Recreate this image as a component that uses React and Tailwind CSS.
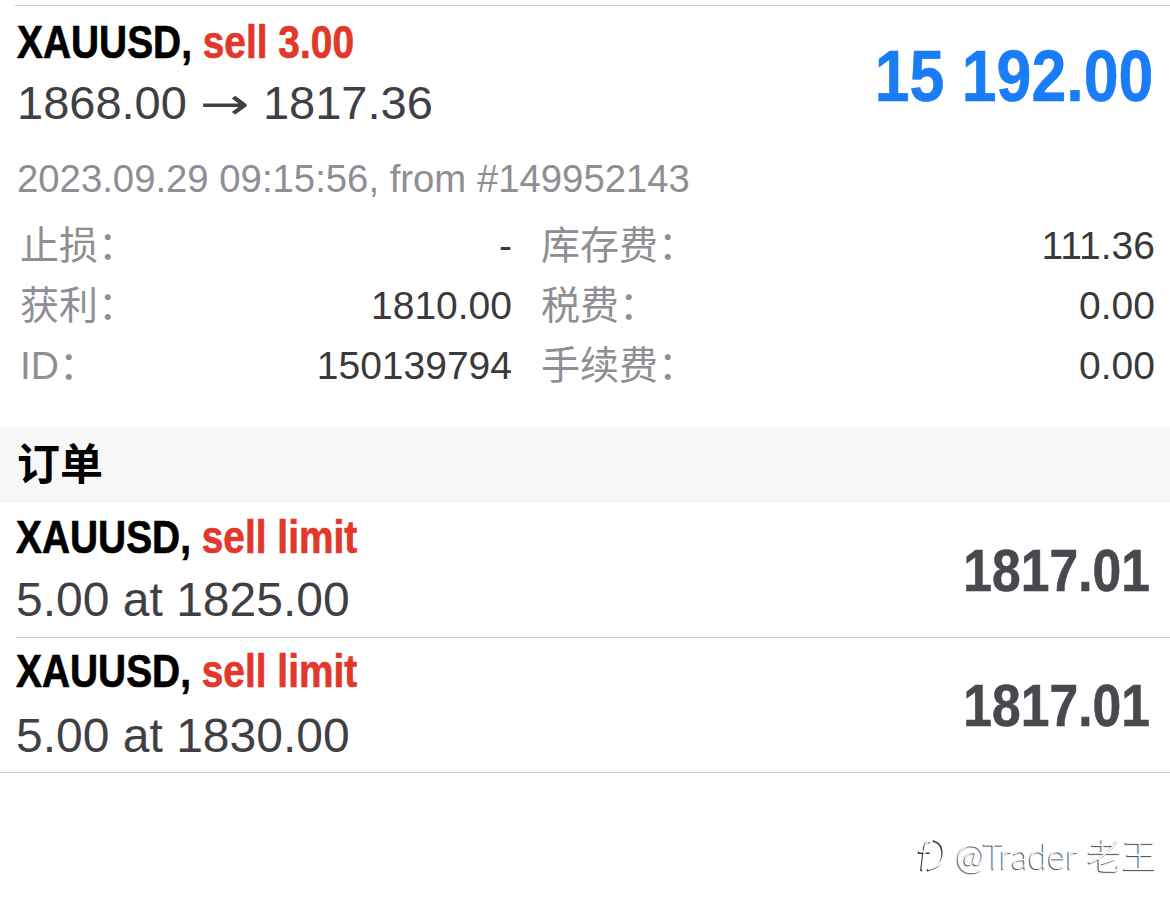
import React from 'react'

const sans = { fontFamily: '"Liberation Sans", "Noto Sans CJK SC", sans-serif' }

// iOS uses a condensed bold here; Liberation Sans squeezed horizontally gets close
function Title({ children }) {
  return (
    <div className="h-[56px] leading-[56px] text-[46px] font-bold whitespace-nowrap">
      <span className="inline-block origin-left scale-x-[0.845] [-webkit-text-stroke:0.7px_currentColor]">{children}</span>
    </div>
  )
}

function Field({ label, value }) {
  return (
    <div className="flex items-center justify-between h-[60px]">
      <span className="text-[#8e8e93]">{label}</span>
      <span className="text-[#3a3a3c]">{value}</span>
    </div>
  )
}

function OrderRow({ price, inset, lift }) {
  return (
    <div className={inset ? 'pl-[16px]' : ''}>
      <div className={'flex items-center justify-between h-[135px] border-b border-[#c8c8cc] pr-[20px] ' + (inset ? '' : 'pl-[16px]')}>
        <div className="-mt-[2px]">
          <Title>
            <span className="text-black">XAUUSD, </span>
            <span className="text-[#e2382c]">sell limit</span>
          </Title>
          <div className={'h-[60px] leading-[60px] text-[48px] text-[#3f3f45] ' + lift}>{price}</div>
        </div>
        <div className="text-[60px] font-bold text-[#48484e] mt-[2px] origin-right scale-x-[0.86] [-webkit-text-stroke:0.6px_currentColor]">1817.01</div>
      </div>
    </div>
  )
}

function Logo() {
  const strokes = (
    <>
      <path d="M13 7 C9.5 7 8.5 10 8 15 L5.5 35" />
      <path d="M3 17.5 L13 17.5" />
      <path d="M18 6 C27 8 29 20 24 28 C20.5 33 16 33 12 35" />
    </>
  )
  return (
    <svg width="34" height="42" viewBox="0 0 34 42" fill="none" strokeLinecap="round">
      <g transform="translate(-1.2,1.2)" stroke="rgba(0,0,0,0.75)" strokeWidth="2.4">{strokes}</g>
      <g stroke="white" strokeWidth="2.2">{strokes}</g>
    </svg>
  )
}

export default function App() {
  return (
    <div className="w-[1170px] h-[910px] bg-white overflow-hidden" style={sans}>
      <div className="pt-[5px]">
        <div className="ml-[15px] border-t border-[#c8c8cc]" />
      </div>

      <div className="pt-[8px] pl-[17px] pr-[17px]">
        <div className="flex items-center justify-between">
          <div>
            <Title>
              <span className="text-black">XAUUSD, </span>
              <span className="text-[#e2382c]">sell 3.00</span>
            </Title>
            <div className="h-[56px] leading-[56px] text-[47px] text-[#3f3f45] mt-[5px] whitespace-nowrap">
              1868.00
              <span className="inline-block w-[76px] text-center font-['DejaVu_Sans',sans-serif] text-[44px]">
                <span className="inline-block scale-x-[1.35]">→</span>
              </span>
              1817.36
            </div>
          </div>
          <div className="text-[72px] font-bold text-[#1a7cf6] mt-[6px] origin-right scale-x-[0.87] [-webkit-text-stroke:0.6px_currentColor]">15 192.00</div>
        </div>
        <div className="mt-[26px] h-[44px] leading-[44px] text-[38.3px] text-[#8e8e93]">2023.09.29 09:15:56, from #149952143</div>
      </div>

      <div className="mt-[15px] pl-[20px] pr-[15px] grid grid-cols-[492px_1fr] gap-x-[29px] text-[39px] pb-[31px]">
        <div>
          <Field label="止损：" value="-" />
          <Field label="获利：" value="1810.00" />
          <Field label="ID：" value="150139794" />
        </div>
        <div>
          <Field label="库存费：" value="111.36" />
          <Field label="税费：" value="0.00" />
          <Field label="手续费：" value="0.00" />
        </div>
      </div>

      <div className="h-[76px] bg-[#f7f7f7] flex items-center pl-[17px] text-[43px] font-bold text-black">订单</div>

      <OrderRow price="5.00 at 1825.00" inset lift="mt-[5px]" />
      <OrderRow price="5.00 at 1830.00" lift="mt-[7px]" />

      <div className="flex justify-end pr-[13px] mt-[56px]">
        <div className="flex items-center gap-[5px] text-white text-[35px] font-light [text-shadow:-1px_1px_1px_rgba(0,0,0,0.75)] font-['Lato','Noto_Sans_CJK_SC',sans-serif]">
          <Logo />
          <span>@Trader 老王</span>
        </div>
      </div>
    </div>
  )
}
